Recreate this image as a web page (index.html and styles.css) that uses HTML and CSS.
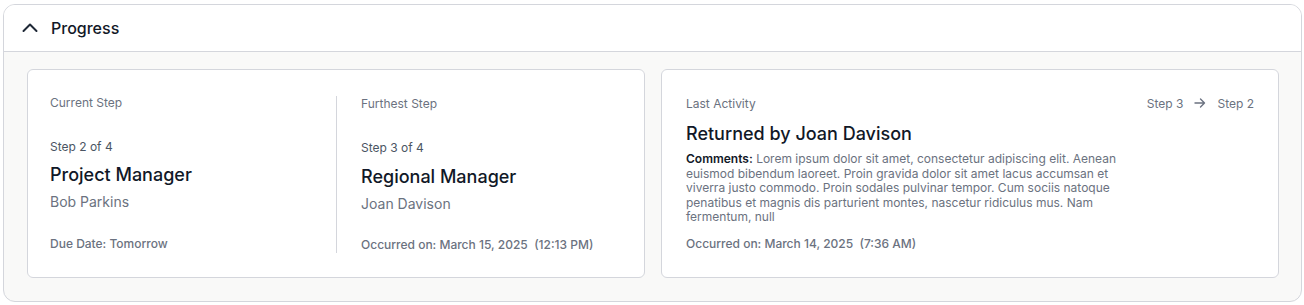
FILE: index.html
```html
<!DOCTYPE html>
<html lang="en">
  <head>
    <meta charset="UTF-8" />
    <meta name="viewport" content="width=device-width, initial-scale=1.0" />
    <title>Progress</title>
    <link rel="stylesheet" href="styles.css">
  </head>
  <body>
    <div class="panel">
      <div class="panel-header">
        <svg class="chevron" width="18" height="18" viewBox="0 0 18 18">
          <path d="M2.5 12 L9 5.5 L15.5 12" fill="none" stroke="#1f2937" stroke-width="2" stroke-linecap="round" stroke-linejoin="round" />
        </svg>
        <span class="panel-title">Progress</span>
      </div>

      <div class="panel-body">
        <div class="card steps">
          <div class="step-col">
            <div class="label">Current Step</div>
            <div class="step-num">Step 2 of 4</div>
            <div class="role">Project Manager</div>
            <div class="person">Bob Parkins</div>
            <div class="meta">Due Date: Tomorrow</div>
          </div>
          <div class="step-col second">
            <div class="label">Furthest Step</div>
            <div class="step-num">Step 3 of 4</div>
            <div class="role">Regional Manager</div>
            <div class="person">Joan Davison</div>
            <div class="meta">Occurred on: March 15, 2025&nbsp; (12:13 PM)</div>
          </div>
        </div>

        <div class="card activity">
          <div class="activity-main">
            <div class="label">Last Activity</div>
            <div class="activity-title">Returned by Joan Davison</div>
            <p class="comments">
              <b>Comments:</b> Lorem ipsum dolor sit amet, consectetur adipiscing elit. Aenean euismod bibendum laoreet. Proin gravida dolor sit amet lacus accumsan et viverra justo commodo. Proin sodales pulvinar tempor. Cum sociis natoque penatibus et magnis dis parturient montes, nascetur ridiculus mus. Nam fermentum, null
            </p>
            <div class="meta">Occurred on: March 14, 2025&nbsp; (7:36 AM)</div>
          </div>
          <div class="transition">
            <span>Step 3</span>
            <svg width="12" height="12" viewBox="0 0 12 12">
              <path d="M1 6 H10.5 M6.5 2 L10.5 6 L6.5 10" fill="none" stroke="#6b7280" stroke-width="1.4" stroke-linecap="round" stroke-linejoin="round" />
            </svg>
            <span>Step 2</span>
          </div>
        </div>
      </div>
    </div>
  </body>
</html>
```

FILE: styles.css
```css
body {
  margin: 0;
  padding: 4px 2px 4px 3px;
  font-family: Inter, "Noto Sans", sans-serif;
  background: #ffffff;
  color: #111827;
}
.panel {
  border: 1px solid #d4d6dc;
  border-radius: 12px;
  overflow: hidden;
  background: #f9f9f8;
}
.panel-header {
  display: flex;
  align-items: center;
  height: 46px;
  padding-left: 17px;
  gap: 12px;
  background: #ffffff;
  border-bottom: 1px solid #d4d6dc;
}
.panel-title {
  font-size: 16px;
  font-weight: 500;
  color: #111827;
}
.panel-body {
  display: grid;
  grid-template-columns: 1fr 1fr;
  gap: 16px;
  padding: 17px 22px 23px 23px;
}
.card {
  background: #ffffff;
  border: 1px solid #d4d6dc;
  border-radius: 6px;
  padding: 24px 24px 24px 22px;
}
.steps {
  display: grid;
  grid-template-columns: 287px 1fr;
}
.label {
  font-size: 12px;
  line-height: 16px;
  color: #6b7280;
}
.step-col {
  display: flex;
  flex-direction: column;
  margin-top: 2px;
}
.step-col:first-child {
  border-right: 1px solid #d4d6dc;
}
.step-col:first-child .label {
  margin-top: -1px;
}
.step-col.second {
  padding-left: 24px;
}
.step-col.second .role {
  margin-top: 9px;
}
.step-col.second .meta {
  margin-top: 23px;
}
.step-num {
  margin-top: 28px;
  font-size: 12px;
  line-height: 16px;
  color: #4b5563;
}
.role {
  margin-top: 8px;
  font-size: 18px;
  line-height: 24px;
  font-weight: 500;
  color: #111827;
}
.person {
  margin-top: 5px;
  font-size: 14px;
  line-height: 20px;
  color: #6b7280;
}
.meta {
  margin-top: 24px;
  font-size: 12px;
  line-height: 16px;
  font-weight: 500;
  color: #6b7280;
}
.activity {
  display: flex;
  padding-left: 24px;
  padding-right: 24px;
}
.activity-main {
  flex: 1;
  padding-top: 2px;
}
.activity-title {
  margin-top: 10px;
  font-size: 18px;
  line-height: 24px;
  font-weight: 500;
  color: #111827;
}
.comments {
  margin: 6px 0 0;
  max-width: 432px;
  font-size: 12px;
  line-height: 14.5px;
  color: #6b7280;
}
.comments b {
  font-weight: 600;
  color: #111827;
}
.activity .meta {
  margin-top: 11px;
}
.transition {
  display: flex;
  align-items: center;
  gap: 11px;
  height: 18px;
  font-size: 12px;
  color: #6b7280;
}
```
